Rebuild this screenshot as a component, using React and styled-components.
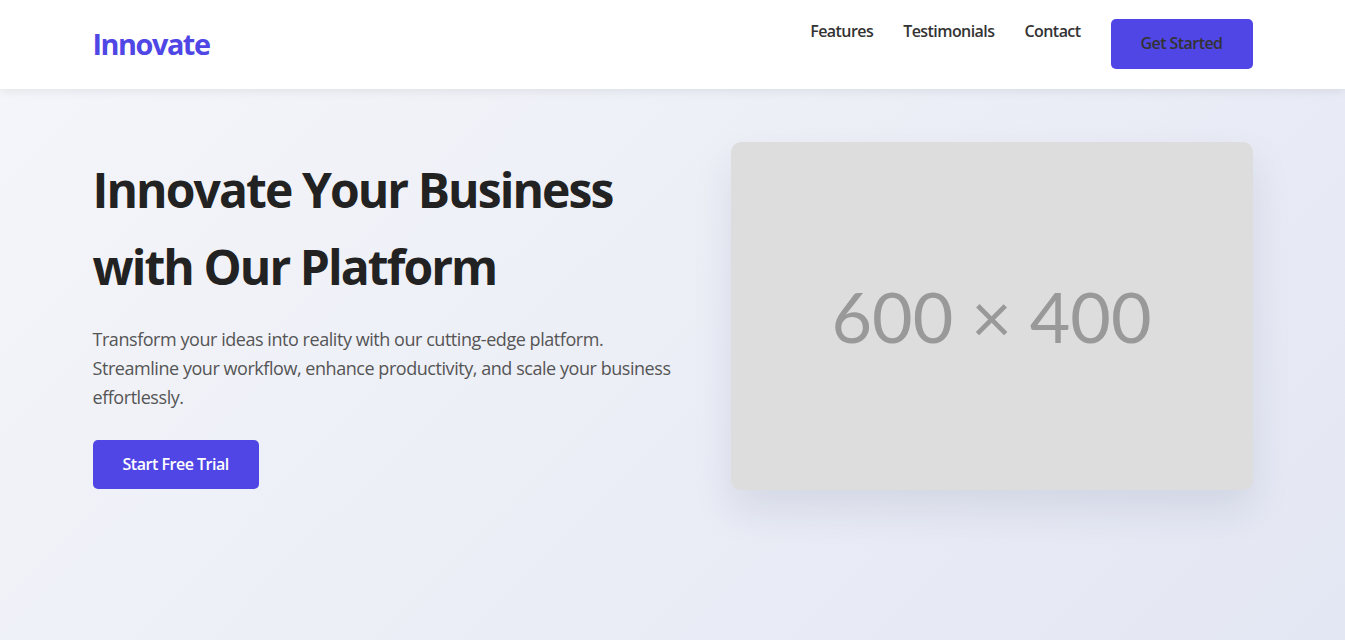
import React from "react";
import styled, { createGlobalStyle } from "styled-components";

const GlobalStyle = createGlobalStyle`
	* {
		box-sizing: border-box;
	}
	body {
		margin: 0;
		font-family: "Open Sans", "Noto Sans", sans-serif;
		line-height: 1.6;
		color: #333;
		background: linear-gradient(135deg, #f5f6fa 0%, #e3e7f3 100%);
		min-height: 100vh;
	}
`;

const Container = styled.div`
	max-width: 1200px;
	margin: 0 auto;
	padding: 0 20px;
`;

const Header = styled.header`
	background: #fff;
	box-shadow: 0 2px 10px rgba(0, 0, 0, 0.08);
	padding: 19px 0 20px;
	position: relative;
	z-index: 2;
`;

const NavBar = styled(Container)`
	display: flex;
	justify-content: space-between;
	align-items: center;
`;

const Logo = styled.div`
	font-size: 28.8px;
	font-weight: 700;
	letter-spacing: -0.05em;
	color: #4f46e5;
`;

const NavLinks = styled.ul`
	display: flex;
	gap: 30px;
	list-style: none;
	margin: 0;
	padding: 0;
`;

const NavLink = styled.a`
	text-decoration: none;
	color: #333;
	font-weight: 600;
	font-size: 16px;
	letter-spacing: -0.035em;
	display: block;
	${({ $button }) =>
		$button &&
		`
		background: #4f46e5;
		padding: 12px 30px;
		border-radius: 5px;
	`}
`;

const Hero = styled.section`
	padding: 53px 0 80px;
`;

const HeroGrid = styled(Container)`
	display: grid;
	grid-template-columns: 1fr 522px;
	gap: 48px;
	align-items: center;
`;

const Title = styled.h1`
	font-size: 48px;
	font-weight: 700;
	line-height: 1.6;
	letter-spacing: -0.04em;
	color: #222;
	margin: 10px 0 20px;
`;

const Lead = styled.p`
	font-size: 18px;
	letter-spacing: -0.025em;
	color: #555;
	margin: 0 0 28px;
`;

const Button = styled.a`
	display: inline-block;
	background: #4f46e5;
	color: #fff;
	font-weight: 600;
	font-size: 16px;
	letter-spacing: -0.03em;
	padding: 12px 30px;
	border-radius: 5px;
	text-decoration: none;
`;

const Placeholder = styled.div`
	width: 100%;
	aspect-ratio: 3 / 2;
	background: #dddddd;
	border-radius: 10px;
	box-shadow: 0 20px 40px rgba(30, 40, 90, 0.1);
	display: flex;
	align-items: center;
	justify-content: center;
	font-family: Lato, sans-serif;
	font-size: 70px;
	color: #999;
`;

const App = () => (
	<>
		<GlobalStyle />
		<Header>
			<NavBar>
				<Logo>Innovate</Logo>
				<NavLinks>
					<li><NavLink href="#">Features</NavLink></li>
					<li><NavLink href="#">Testimonials</NavLink></li>
					<li><NavLink href="#">Contact</NavLink></li>
					<li><NavLink href="#" $button>Get Started</NavLink></li>
				</NavLinks>
			</NavBar>
		</Header>
		<Hero>
			<HeroGrid>
				<div>
					<Title>Innovate Your Business with Our Platform</Title>
					<Lead>
						Transform your ideas into reality with our cutting-edge platform.
						Streamline your workflow, enhance productivity, and scale your
						business effortlessly.
					</Lead>
					<Button href="#">Start Free Trial</Button>
				</div>
				<Placeholder>600 × 400</Placeholder>
			</HeroGrid>
		</Hero>
	</>
);

export default App;
